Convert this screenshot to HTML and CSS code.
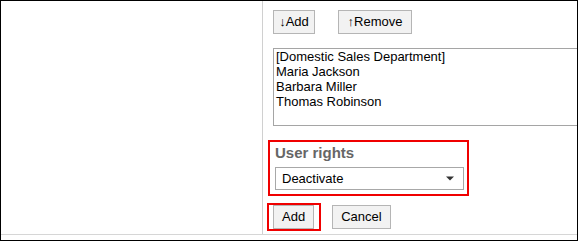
FILE: index.html
```html
<!DOCTYPE html>
<html lang="en">
<head>
<meta charset="utf-8">
<title>User rights</title>
<link rel="stylesheet" href="styles.css">
</head>
<body>
<div class="frame">
  <div class="layout">
    <div class="side"></div>
    <div class="main">
      <div class="move-row">
        <button class="btn btn-add-down" type="button">↓Add</button>
        <button class="btn btn-remove-up" type="button">↑Remove</button>
      </div>
      <div class="listbox" role="listbox">
        <div class="option">[Domestic Sales Department]</div>
        <div class="option">Maria Jackson</div>
        <div class="option">Barbara Miller</div>
        <div class="option">Thomas Robinson</div>
      </div>
      <div class="field highlight">
        <div class="field-label">User rights</div>
        <div class="select">
          <span class="select-value">Deactivate</span>
          <svg class="select-arrow" width="8" height="5" viewBox="0 0 8 5"><path d="M0 0.5H8L4 4.5Z" fill="#333"/></svg>
        </div>
      </div>
      <div class="action-row">
        <div class="highlight add-wrap">
          <button class="btn" type="button">Add</button>
        </div>
        <button class="btn btn-cancel" type="button">Cancel</button>
      </div>
    </div>
  </div>
</div>
</body>
</html>
```
FILE: styles.css
```css
html, body {
  margin: 0;
  padding: 0;
  background: #fff;
}

body {
  font-family: "Liberation Sans", Arial, sans-serif;
  font-size: 13px;
  color: #000;
}

.frame {
  width: 578px;
  height: 241px;
  box-sizing: border-box;
  border: 1px solid #000;
  overflow: hidden;
}

.layout {
  display: grid;
  grid-template-columns: 261px minmax(0, 1fr);
  border-bottom: 1px solid #d6d6d6;
}

.main {
  border-left: 1px solid #d0d0d0;
  padding: 9px 0 3px 10px;
  display: flex;
  flex-direction: column;
  align-items: flex-start;
  min-width: 0;
}

.btn {
  font-family: "Liberation Sans", Arial, sans-serif;
  font-size: 13px;
  color: #000;
  height: 24px;
  box-sizing: border-box;
  padding: 0 8px;
  margin: 0;
  background: #f2f2f2;
  border: 1px solid #b5b5b5;
  border-radius: 0;
  line-height: 22px;
}

.move-row {
  display: flex;
  gap: 23px;
}

.btn-add-down {
  width: 42px;
  padding: 0;
}

.btn-remove-up {
  width: 74px;
  padding: 0;
}

.listbox {
  margin-top: 14px;
  width: 330px;
  height: 78px;
  box-sizing: border-box;
  border: 1px solid #a5a5a5;
  padding: 0 2px;
  line-height: 15px;
  white-space: nowrap;
}

.highlight {
  border: 2px solid #f00000;
}

.field {
  margin-top: 14px;
  margin-left: -5px;
  padding: 2px 3px 4px 5px;
}

.field-label {
  font-size: 15px;
  font-weight: bold;
  color: #666;
  line-height: 18px;
}

.select {
  margin-top: 5px;
  width: 189px;
  height: 23px;
  box-sizing: border-box;
  border: 1px solid #a8a8a8;
  display: flex;
  align-items: center;
  justify-content: space-between;
  padding: 0 9px 0 6px;
  line-height: 15px;
}

.select-arrow {
  display: block;
}

.action-row {
  margin-top: 7px;
  display: flex;
  align-items: center;
}

.add-wrap {
  margin-left: -6px;
  padding: 0 5px 0 4px;
  display: flex;
}

.btn-cancel {
  margin-left: 11px;
}
```
